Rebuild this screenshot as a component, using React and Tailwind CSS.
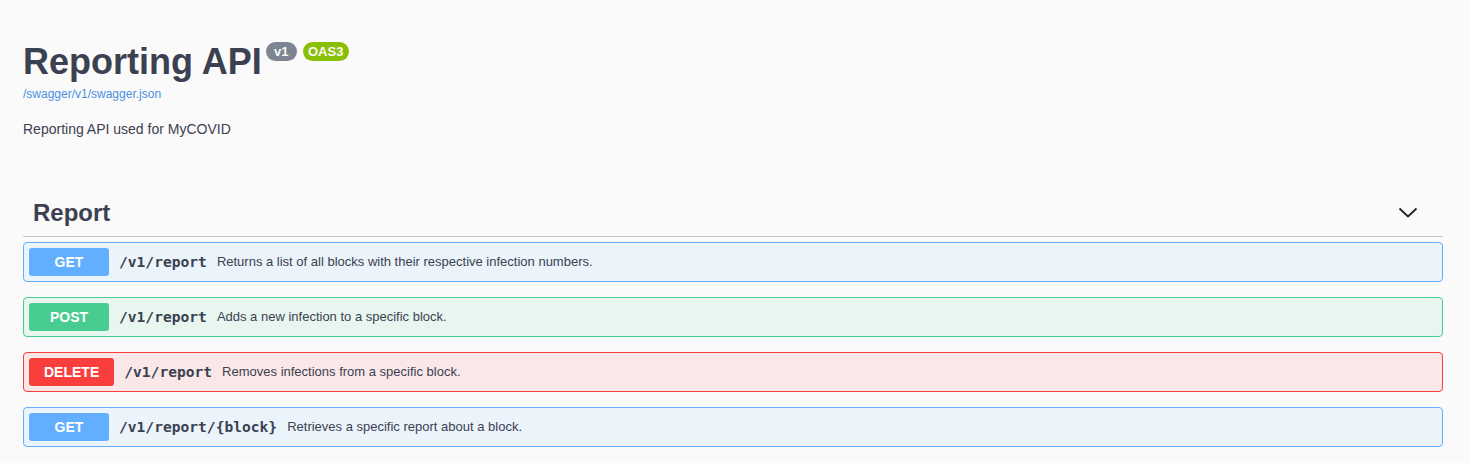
import React from "react";

const ops = [
  {
    method: "GET",
    path: "/v1/report",
    desc: "Returns a list of all blocks with their respective infection numbers.",
    box: "border-[#61affe] bg-[#ebf3fb]",
    btn: "bg-[#61affe]",
  },
  {
    method: "POST",
    path: "/v1/report",
    desc: "Adds a new infection to a specific block.",
    box: "border-[#49cc90] bg-[#e8f6f0]",
    btn: "bg-[#49cc90]",
  },
  {
    method: "DELETE",
    path: "/v1/report",
    desc: "Removes infections from a specific block.",
    box: "border-[#f93e3e] bg-[#fae7e7]",
    btn: "bg-[#f93e3e]",
  },
  {
    method: "GET",
    path: "/v1/report/{block}",
    desc: "Retrieves a specific report about a block.",
    box: "border-[#61affe] bg-[#ebf3fb]",
    btn: "bg-[#61affe]",
  },
];

export default function App() {
  return (
    <div
      className="min-h-screen bg-[#fafafa] text-[#3b4151]"
      style={{ fontFamily: '"Liberation Sans", Arial, sans-serif' }}
    >
      <div className="pl-[23px] pr-[27px]">
        <div className="pt-[44px]">
          <div className="flex items-start">
            <h2 className="text-[36px] font-bold leading-[36px] text-[#3b4151]">
              Reporting API
            </h2>
            <span className="-mt-[2px] ml-[4px] flex h-[19px] w-[31px] items-center justify-center rounded-full bg-[#7d8492] text-[13px] font-bold leading-[19px] text-[#fafafa]">
              v1
            </span>
            <span className="-mt-[2px] ml-[6px] flex h-[19px] w-[46px] items-center justify-center rounded-full bg-[#89bf04] text-[13px] font-bold leading-[19px] text-[#fafafa]">
              OAS3
            </span>
          </div>
          <a className="mt-[7px] block text-[12px] leading-[15px] text-[#4990e2]">
            /swagger/v1/swagger.json
          </a>
          <p className="mt-[17px] text-[14px] leading-[20px] text-[#3b4151]">
            Reporting API used for MyCOVID
          </p>
        </div>

        <div className="mt-[50px]">
          <div className="mb-[5px] flex items-center border-b border-[#c4c6cb] pl-[10px] pr-[25px] pt-[10px] pb-[9px]">
            <h3 className="flex-1 text-[24px] font-bold leading-[28px] text-[#3b4151]">
              Report
            </h3>
            <svg width="20" height="20" viewBox="0 0 20 20" className="text-[#222]">
              <path
                d="M1.5 5.5 L10 13.5 L18.5 5.5"
                fill="none"
                stroke="currentColor"
                strokeWidth="1.8"
              />
            </svg>
          </div>

          {ops.map((op, i) => (
            <div
              key={i}
              className={`mb-[15px] flex items-center rounded-[4px] border p-[5px] ${op.box}`}
            >
              <span
                className={`min-w-[80px] rounded-[3px] px-[15px] py-[6px] text-center text-[14px] font-bold leading-[16px] text-white ${op.btn}`}
              >
                {op.method}
              </span>
              <span
                className="px-[10px] text-[14.6px] font-bold leading-[16px] text-[#3b4151]"
                style={{ fontFamily: '"DejaVu Sans Mono", monospace' }}
              >
                {op.path}
              </span>
              <span className="flex-1 text-[13px] leading-[16px] text-[#3b4151]">
                {op.desc}
              </span>
            </div>
          ))}
        </div>
      </div>
    </div>
  );
}
